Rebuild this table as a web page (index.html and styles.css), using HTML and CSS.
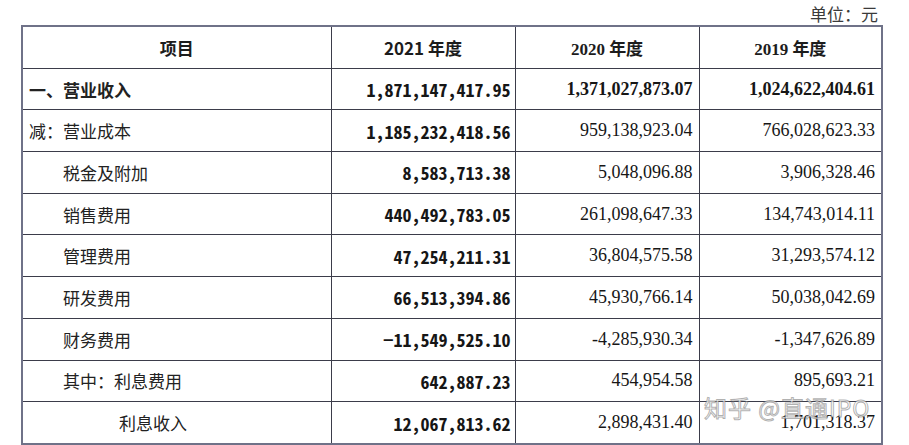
FILE: index.html
```html
<!DOCTYPE html>
<html lang="zh-CN">
<head>
<meta charset="utf-8">
<title>利润表</title>
<link rel="stylesheet" href="styles.css">
</head>
<body>
<div class="page">
  <div class="unit">单位：元</div>
  <table class="fin">
    <colgroup>
      <col class="c-label">
      <col class="c-num">
      <col class="c-num">
      <col class="c-num3">
    </colgroup>
    <thead>
      <tr>
        <th class="h-label">项目</th>
        <th class="h-2021">2021 年度</th>
        <th class="h-serif">2020 年度</th>
        <th class="h-serif">2019 年度</th>
      </tr>
    </thead>
    <tbody>
      <tr class="strong">
        <td class="label b">一、营业收入</td>
        <td class="n21">1,871,147,417.95</td>
        <td class="ns b">1,371,027,873.07</td>
        <td class="ns b">1,024,622,404.61</td>
      </tr>
      <tr>
        <td class="label">减：营业成本</td>
        <td class="n21">1,185,232,418.56</td>
        <td class="ns">959,138,923.04</td>
        <td class="ns">766,028,623.33</td>
      </tr>
      <tr>
        <td class="label i1">税金及附加</td>
        <td class="n21">8,583,713.38</td>
        <td class="ns">5,048,096.88</td>
        <td class="ns">3,906,328.46</td>
      </tr>
      <tr>
        <td class="label i1">销售费用</td>
        <td class="n21">440,492,783.05</td>
        <td class="ns">261,098,647.33</td>
        <td class="ns">134,743,014.11</td>
      </tr>
      <tr>
        <td class="label i1">管理费用</td>
        <td class="n21">47,254,211.31</td>
        <td class="ns">36,804,575.58</td>
        <td class="ns">31,293,574.12</td>
      </tr>
      <tr>
        <td class="label i1">研发费用</td>
        <td class="n21">66,513,394.86</td>
        <td class="ns">45,930,766.14</td>
        <td class="ns">50,038,042.69</td>
      </tr>
      <tr>
        <td class="label i1">财务费用</td>
        <td class="n21">−11,549,525.10</td>
        <td class="ns">-4,285,930.34</td>
        <td class="ns">-1,347,626.89</td>
      </tr>
      <tr>
        <td class="label i1">其中：利息费用</td>
        <td class="n21">642,887.23</td>
        <td class="ns">454,954.58</td>
        <td class="ns">895,693.21</td>
      </tr>
      <tr>
        <td class="label i2">利息收入</td>
        <td class="n21">12,067,813.62</td>
        <td class="ns">2,898,431.40</td>
        <td class="ns">1,701,318.37</td>
      </tr>
    </tbody>
  </table>
  <div class="watermark">知乎 @直通IPO</div>
</div>
</body>
</html>
```

FILE: styles.css
```css
html, body {
  margin: 0;
  padding: 0;
  background: #ffffff;
}

.page {
  position: relative;
  width: 909px;
  height: 445px;
  overflow: hidden;
  font-family: "Noto Sans CJK SC", "Noto Sans", sans-serif;
  color: #1c1c1c;
}

.unit {
  height: 25px;
  line-height: 27px;
  font-size: 17px;
  text-align: right;
  padding-right: 31px;
  color: #3a3a3a;
}

.fin {
  margin-left: 21px;
  width: 860px;
  table-layout: fixed;
  border-collapse: collapse;
  border: 2px solid #6f7288;
}

.c-label { width: 309px; }
.c-num { width: 184px; }
.c-num3 { width: 183px; }

.fin th,
.fin td {
  border: 1px solid #3b3c4a;
  height: 40.7px;
  padding: 0;
  white-space: nowrap;
  overflow: hidden;
}

.fin th {
  text-align: center;
  font-weight: 700;
  font-size: 17px;
}

.h-label,
.h-2021 {
  font-family: "Noto Sans CJK SC", sans-serif;
}

.h-serif {
  font-family: "Liberation Serif", "Noto Sans CJK SC", serif;
  font-size: 19px;
}

.label {
  font-size: 17px;
  text-align: left;
  padding-left: 6px !important;
  font-weight: 400;
  color: #222;
}

.label.b {
  font-weight: 700;
}

.label.i1 {
  padding-left: 40px !important;
}

.label.i2 {
  padding-left: 96px !important;
}

.n21 {
  font-family: "Noto Sans CJK SC", sans-serif;
  font-feature-settings: "hwid" 1;
  font-weight: 700;
  font-size: 18px;
  text-align: right;
  padding-right: 4px !important;
  color: #161616;
}

.ns {
  font-family: "Liberation Serif", "Times New Roman", serif;
  font-size: 18px;
  text-align: right;
  padding-right: 6px !important;
  color: #161616;
}

.ns.b {
  font-weight: 700;
}

.watermark {
  position: absolute;
  left: 704px;
  top: 390px;
  font-family: "Noto Sans CJK SC", sans-serif;
  font-size: 23px;
  letter-spacing: 1px;
  color: rgba(255, 255, 255, 0.75);
  -webkit-text-stroke: 1px rgba(110, 110, 110, 0.55);
  white-space: nowrap;
}
```
